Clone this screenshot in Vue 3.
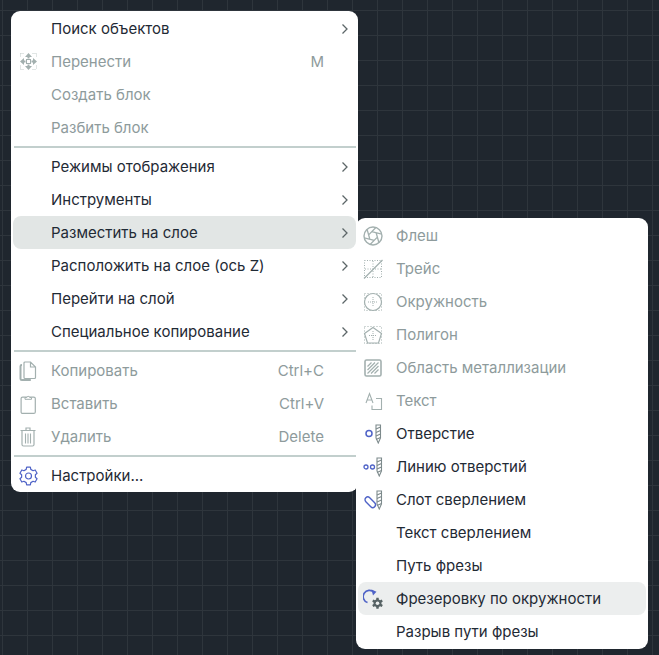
<template>
  <div class="canvas">
    <div class="menu main-menu">
      <template v-for="(group, i) in mainGroups" :key="i">
        <div v-if="i > 0" class="sep"></div>
        <div
          v-for="item in group"
          :key="item.label"
          class="item"
          :class="{ disabled: item.disabled, active: item.active }"
        >
          <span class="icon"><MenuIcon v-if="item.icon" :name="item.icon" /></span>
          <span class="label">{{ item.label }}</span>
          <span v-if="item.hint" class="hint">{{ item.hint }}</span>
          <span class="arrow">
            <svg v-if="item.more" width="8" height="12" viewBox="0 0 8 12">
              <path d="M1.5 1.5 6 6l-4.5 4.5" fill="none" stroke="#5c6668" stroke-width="1.3" />
            </svg>
          </span>

          <div v-if="item.active" class="menu sub-menu">
            <div
              v-for="sub in subItems"
              :key="sub.label"
              class="item"
              :class="{ disabled: sub.disabled, hover: sub.hover }"
            >
              <span class="icon"><MenuIcon v-if="sub.icon" :name="sub.icon" /></span>
              <span class="label">{{ sub.label }}</span>
            </div>
          </div>
        </div>
      </template>
    </div>
  </div>
</template>

<script setup>
import { h } from 'vue'

const GREY = '#a3b0af'
const BLUE = '#4f63c7'
const DARK = '#566264'

// lobed outline for the gear icons
const gearPath = (cx, cy, outer, inner, teeth) => {
  const pts = []
  const step = (Math.PI * 2) / teeth
  for (let k = 0; k < teeth; k++) {
    const a = k * step - Math.PI / 2
    const pairs = [
      [a - step * 0.2, outer],
      [a + step * 0.2, outer],
      [a + step * 0.32, inner],
      [a + step * 0.68, inner],
    ]
    for (const [ang, r] of pairs) {
      pts.push(`${(cx + r * Math.cos(ang)).toFixed(2)} ${(cy + r * Math.sin(ang)).toFixed(2)}`)
    }
  }
  return 'M' + pts.join('L') + 'z'
}

// camera-aperture blades: each side of the inner hexagon runs on to the outer circle
const aperturePath = (cx, cy, R, r) => {
  let d = ''
  for (let k = 0; k < 6; k++) {
    const a = (k * Math.PI) / 3 + 0.25
    const b = a + Math.PI / 3
    const vx = r * Math.cos(a)
    const vy = r * Math.sin(a)
    let dx = r * Math.cos(b) - vx
    let dy = r * Math.sin(b) - vy
    const len = Math.hypot(dx, dy)
    dx /= len
    dy /= len
    const dot = vx * dx + vy * dy
    const t = -dot + Math.sqrt(dot * dot - (vx * vx + vy * vy) + R * R)
    d += `M${(cx + vx).toFixed(2)} ${(cy + vy).toFixed(2)}L${(cx + vx + dx * t).toFixed(2)} ${(cy + vy + dy * t).toFixed(2)}`
  }
  return d
}

// drill bit drawn at the right of the hole icons
const drill = (x, y = 1) => [
  h('path', { d: `M${x} ${y}h4.5v13l-2.25 5-2.25-5z`, fill: 'none', stroke: '#7d8a8c', 'stroke-width': 1.1 }),
  h('path', {
    d: `M${x} ${y + 4}l4.5-2M${x} ${y + 7.5}l4.5-2M${x} ${y + 11}l4.5-2M${x} ${y + 14.5}l4.5-2`,
    stroke: '#7d8a8c',
    'stroke-width': 1.1,
  }),
]

const icons = {
  move: () => [
    h('path', {
      d: 'M1.5 1.5h4M13.5 1.5h4M1.5 17.5h4M13.5 17.5h4M1.5 1.5v4M17.5 1.5v4M1.5 13.5v4M17.5 13.5v4',
      fill: 'none', stroke: '#c3cccb', 'stroke-dasharray': '1 1',
    }),
    h('rect', { x: 7.5, y: 7.5, width: 4, height: 4, fill: 'none', stroke: GREY }),
    h('path', {
      d: 'M9.5 1l3.5 4h-2.500v1.500h-2V5H6zM9.5 18l3.500-4h-2.500v-1.500h-2V14H6zM1 9.500l4-3.500v2.500h1.500v2H5V13zM18 9.500 14 6v2.500h-1.500v2H14V13z',
      fill: GREY,
    }),
  ],
  copy: () => [
    h('path', { d: 'M3 4H2.800A1.300 1.300 0 0 0 1.500 5.300v12.400a1.300 1.300 0 0 0 1.300 1.300h9', fill: 'none', stroke: GREY, 'stroke-width': 2 }),
    h('path', { d: 'M6 1h5.500L16.500 6v10.500a1 1 0 0 1-1 1H6a1 1 0 0 1-1-1V2a1 1 0 0 1 1-1zM11.500 1v5h5', fill: '#fff', stroke: GREY, 'stroke-width': 1.2 }),
  ],
  paste: () => [
    h('rect', { x: 2.1, y: 3.1, width: 14.2, height: 16.3, rx: 1.5, fill: 'none', stroke: GREY, 'stroke-width': 1.2 }),
    h('path', { d: 'M6 3.500h1.800a1.500 1.500 0 0 1 2.900 0h1.800v1.800H6z', fill: '#fff', stroke: GREY }),
  ],
  trash: () => [
    h('path', { d: 'M1.500 3.500h15M7 3V1h4v2', fill: 'none', stroke: GREY, 'stroke-width': 1.2 }),
    h('path', { d: 'M3 4v13.500a1.500 1.500 0 0 0 1.500 1.500h9a1.500 1.500 0 0 0 1.500-1.500V4', fill: 'none', stroke: GREY, 'stroke-width': 1.2 }),
    h('path', { d: 'M6.500 6.500v10M9 6.500v10M11.500 6.500v10', stroke: GREY, 'stroke-width': 1.1 }),
  ],
  gear: () => [
    h('path', { d: gearPath(9.5, 10, 9, 7, 6), fill: 'none', stroke: BLUE, 'stroke-width': 1.2, 'stroke-linejoin': 'round' }),
    h('circle', { cx: 9.5, cy: 10, r: 3, fill: 'none', stroke: BLUE, 'stroke-width': 1.2 }),
  ],
  flash: () => [
    h('circle', { cx: 10, cy: 10, r: 9, fill: 'none', stroke: GREY, 'stroke-width': 1.4 }),
    h('path', { d: aperturePath(10, 10, 9, 4.5), fill: 'none', stroke: GREY, 'stroke-width': 1.3 }),
  ],
  trace: () => [
    h('rect', { x: 1.5, y: 1.5, width: 17, height: 17, fill: 'none', stroke: GREY, 'stroke-dasharray': '1 1.5' }),
    h('path', { d: 'M10 2v17M2 10h17', stroke: GREY, 'stroke-dasharray': '1 1.5', fill: 'none' }),
    h('path', { d: 'M1 19.500 19.500 1', stroke: GREY, 'stroke-width': 1.3 }),
  ],
  circle: () => [
    h('rect', { x: 1.5, y: 1.5, width: 17, height: 17, fill: 'none', stroke: GREY, 'stroke-dasharray': '1 2' }),
    h('circle', { cx: 10, cy: 10, r: 8.5, fill: '#fff', stroke: GREY, 'stroke-width': 1.2 }),
    h('path', { d: 'M10 5v10M5 10h10', stroke: GREY, 'stroke-dasharray': '1 1', fill: 'none' }),
  ],
  polygon: () => [
    h('rect', { x: 1.5, y: 1.5, width: 17, height: 17, fill: 'none', stroke: GREY, 'stroke-dasharray': '1 2' }),
    h('path', { d: 'M10 2.500 18.500 8.500 15.500 18H4.500L1.500 8.500z', fill: '#fff', stroke: GREY, 'stroke-width': 1.2 }),
    h('path', { d: 'M10 6v9M6 10.500h8', stroke: GREY, 'stroke-dasharray': '1 1', fill: 'none' }),
  ],
  fill: () => [
    h('rect', { x: 2, y: 2, width: 16, height: 16, rx: 1.5, fill: 'none', stroke: GREY, 'stroke-width': 1.6 }),
    h('path', { d: 'M4.500 8.500l4-4M4.500 12l7.500-7.500M4.500 15.500l11-11M8 15.500l7.500-7.500M11.500 15.500l4-4', stroke: GREY, 'stroke-width': 1.2 }),
  ],
  text: () => [
    h('path', { d: 'M3 12 6.500 2.500 10 12M4.300 9h4.500', fill: 'none', stroke: GREY, 'stroke-width': 1.1 }),
    h('path', { d: 'M13 7.500h5.500v11H9v-4', fill: 'none', stroke: GREY, 'stroke-width': 1.1 }),
  ],
  hole: () => [
    h('circle', { cx: 6, cy: 9.500, r: 3, fill: 'none', stroke: BLUE, 'stroke-width': 1.5 }),
    ...drill(13),
  ],
  holeLine: () => [
    h('circle', { cx: 3, cy: 10, r: 2, fill: 'none', stroke: BLUE, 'stroke-width': 1.3 }),
    h('circle', { cx: 9.5, cy: 10, r: 2, fill: 'none', stroke: BLUE, 'stroke-width': 1.3 }),
    ...drill(14),
  ],
  slot: () => [
    h('rect', { x: 1, y: 9.500, width: 12.500, height: 5.500, rx: 2.75, transform: 'rotate(45 7.250 12.250)', fill: 'none', stroke: BLUE, 'stroke-width': 1.4 }),
    ...drill(14),
  ],
  routeCircle: () => [
    h('path', { d: 'M11 3.200A6.300 6.300 0 1 0 4.500 13.600', fill: 'none', stroke: BLUE, 'stroke-width': 1.6 }),
    h('path', { d: 'M8.500.5l5 2.200L10 6.500z', fill: BLUE }),
    h('path', { d: gearPath(14.5, 14.2, 5.6, 4, 6), fill: DARK }),
    h('circle', { cx: 14.5, cy: 14.2, r: 1.8, fill: '#eceeee' }),
  ],
}

const MenuIcon = (props) =>
  h('svg', { width: 20, height: 20, viewBox: '0 0 20 20' }, icons[props.name]())
MenuIcon.props = ['name']

const mainGroups = [
  [
    { label: 'Поиск объектов', more: true },
    { label: 'Перенести', disabled: true, icon: 'move', hint: 'M' },
    { label: 'Создать блок', disabled: true },
    { label: 'Разбить блок', disabled: true },
  ],
  [
    { label: 'Режимы отображения', more: true },
    { label: 'Инструменты', more: true },
    { label: 'Разместить на слое', more: true, active: true },
    { label: 'Расположить на слое (ось Z)', more: true },
    { label: 'Перейти на слой', more: true },
    { label: 'Специальное копирование', more: true },
  ],
  [
    { label: 'Копировать', disabled: true, icon: 'copy', hint: 'Ctrl+C' },
    { label: 'Вставить', disabled: true, icon: 'paste', hint: 'Ctrl+V' },
    { label: 'Удалить', disabled: true, icon: 'trash', hint: 'Delete' },
  ],
  [{ label: 'Настройки...', icon: 'gear' }],
]

const subItems = [
  { label: 'Флеш', disabled: true, icon: 'flash' },
  { label: 'Трейс', disabled: true, icon: 'trace' },
  { label: 'Окружность', disabled: true, icon: 'circle' },
  { label: 'Полигон', disabled: true, icon: 'polygon' },
  { label: 'Область металлизации', disabled: true, icon: 'fill' },
  { label: 'Текст', disabled: true, icon: 'text' },
  { label: 'Отверстие', icon: 'hole' },
  { label: 'Линию отверстий', icon: 'holeLine' },
  { label: 'Слот сверлением', icon: 'slot' },
  { label: 'Текст сверлением' },
  { label: 'Путь фрезы' },
  { label: 'Фрезеровку по окружности', icon: 'routeCircle', hover: true },
  { label: 'Разрыв пути фрезы' },
]
</script>

<style scoped>
.canvas {
  box-sizing: border-box;
  height: 655px;
  padding: 11px;
  overflow: hidden;
  background-color: #1f262e;
  background-image:
    linear-gradient(to right, #2e353c 1px, transparent 1px),
    linear-gradient(to bottom, #2e353c 1px, transparent 1px);
  background-size: 25px 25px;
  background-position: 2px 10px;
  font-family: Inter, "Liberation Sans", sans-serif;
  font-size: 15px;
  color: #1f2a35;
}

.menu {
  background: #fff;
  border-radius: 9px;
  padding: 1px 2px 0 2px;
}

.main-menu {
  width: 347px;
  box-sizing: border-box;
}

.sub-menu {
  position: absolute;
  top: 2px;
  left: 100%;
  width: 292px;
  box-sizing: border-box;
  padding: 1px 2px;
  color: #1f2a35;
  z-index: 2;
}

.item {
  position: relative;
  display: flex;
  align-items: center;
  height: 33px;
  padding-left: 6px;
  border-radius: 8px;
  white-space: nowrap;
}

.sub-menu .item {
  padding-left: 5px;
}

.item.active {
  background: #e2e6e5;
}

.item.hover {
  background: #eceeee;
}

.item.disabled {
  color: #8e9b9c;
}

.icon {
  display: flex;
  width: 20px;
  height: 20px;
  margin-right: 12px;
  flex: none;
}

.sub-menu .icon {
  margin-right: 13px;
}

.label {
  flex: 1;
}

.hint {
  color: #8e9b9c;
}

.arrow {
  display: flex;
  align-items: center;
  justify-content: flex-end;
  width: 32px;
  padding-right: 7px;
  box-sizing: border-box;
  flex: none;
}

.sep {
  height: 2px;
  margin: 2px 0 2px 1px;
  background: #c2cfcd;
}
</style>

<style>
html,
body {
  margin: 0;
}
</style>
